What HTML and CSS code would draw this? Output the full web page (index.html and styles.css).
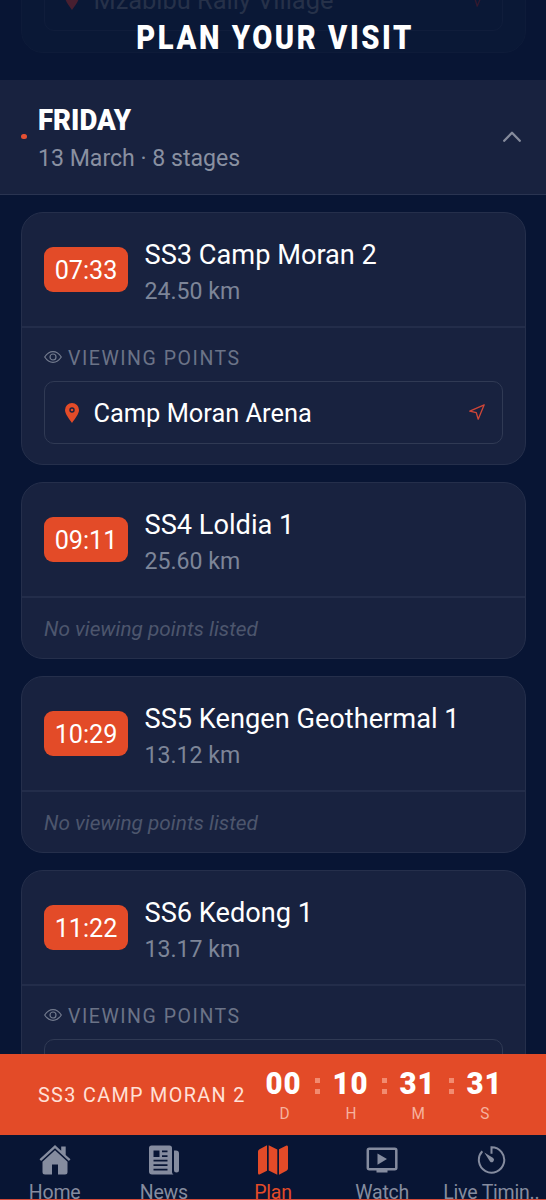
FILE: index.html
```html
<!DOCTYPE html>
<html lang="en">
<head>
<meta charset="utf-8">
<title>Plan your visit</title>
<link rel="stylesheet" href="styles.css">
</head>
<body>
<svg class="sprite" aria-hidden="true">
  <symbol id="eye" viewBox="0 0 18 12"><path d="M.7 6C3 2.500 5.600 .7 9 .7S15 2.500 17.300 6C15 9.500 12.400 11.300 9 11.300S3 9.500 .7 6Z"/><circle cx="9" cy="6" r="3"/></symbol>
  <symbol id="pin" viewBox="0 0 14 20"><path fill-rule="evenodd" d="M7 0a7 7 0 0 0-7 7c0 4 4 8.500 7 13 3-4.500 7-9 7-13a7 7 0 0 0-7-7Zm0 4.300a2.700 2.700 0 1 1 0 5.400 2.700 2.700 0 0 1 0-5.400Z"/><circle cx="7" cy="7" r="1.300"/></symbol>
  <symbol id="send" viewBox="0 0 16 16"><path d="M15.200 .8 .8 7.200 7.300 8.700 9.200 15.200Z"/></symbol>
</svg>
<div class="app">
  <header class="top">
    <div class="ghost"><div class="ghost-row"><svg class="pin"><use href="#pin"/></svg><span class="place">Mzabibu Rally Village</span><svg class="send"><use href="#send"/></svg></div></div>
    <h1 class="title">PLAN YOUR VISIT</h1>
  </header>
  <section class="day">
    <i class="dot"></i>
    <div class="day-text"><h2 class="day-name">FRIDAY</h2><p class="day-sub">13 March · 8 stages</p></div>
    <svg class="chevron" viewBox="0 0 18 11"><path d="M1.200 9.800 9 1.800l7.800 8"/></svg>
  </section>
  <main class="list">
    <article class="card">
      <div class="stage"><time class="time">07:33</time><div class="info"><h3 class="name">SS3 Camp Moran 2</h3><p class="km">24.50 km</p></div></div>
      <div class="views"><p class="label"><svg class="eye"><use href="#eye"/></svg><span>VIEWING POINTS</span></p>
        <div class="point"><svg class="pin"><use href="#pin"/></svg><span class="place">Camp Moran Arena</span><svg class="send"><use href="#send"/></svg></div></div>
    </article>
    <article class="card">
      <div class="stage"><time class="time">09:11</time><div class="info"><h3 class="name">SS4 Loldia 1</h3><p class="km">25.60 km</p></div></div>
      <p class="none">No viewing points listed</p>
    </article>
    <article class="card">
      <div class="stage"><time class="time">10:29</time><div class="info"><h3 class="name">SS5 Kengen Geothermal 1</h3><p class="km">13.12 km</p></div></div>
      <p class="none">No viewing points listed</p>
    </article>
    <article class="card">
      <div class="stage"><time class="time">11:22</time><div class="info"><h3 class="name">SS6 Kedong 1</h3><p class="km">13.17 km</p></div></div>
      <div class="views"><p class="label"><svg class="eye"><use href="#eye"/></svg><span>VIEWING POINTS</span></p>
        <div class="point"></div></div>
    </article>
  </main>
  <section class="countdown">
    <span class="next">SS3 CAMP MORAN 2</span>
    <div class="clock">
      <div class="unit"><b class="num">00</b><span class="abbr">D</span></div><i class="colon"></i>
      <div class="unit"><b class="num">10</b><span class="abbr">H</span></div><i class="colon"></i>
      <div class="unit"><b class="num">31</b><span class="abbr">M</span></div><i class="colon"></i>
      <div class="unit"><b class="num">31</b><span class="abbr">S</span></div>
    </div>
  </section>
  <nav class="tabs">
    <a class="tab"><svg class="icon" viewBox="0 0 32 30"><path d="M16 0 .5 14.300l1.600 1.700L16 3.300 29.900 16l1.600-1.700-4.800-4.400V1.500h-4.500v4.200Z"/><path d="M16 5.300 3.500 16.800V27q0 2.500 2.500 2.500h7V19.500h6v10h7q2.500 0 2.500-2.500V16.800Z"/></svg><span>Home</span></a>
    <a class="tab"><svg class="icon" viewBox="0 0 32 30"><path fill-rule="evenodd" d="M3.500.5h18q2.500 0 2.500 2.500v24q0 1.500 1.500 2.500H4Q1 29.500 1 26.500V3Q1 .5 3.500.5ZM5.500 5.500v6.500h6V5.500Zm8.500 0v1.700h5.500V5.500Zm0 4.700v1.700h5.500v-1.700ZM5.500 14.700v1.700h14v-1.700Zm0 4.500v1.700h14v-1.700Zm0 4.500v1.700h14v-1.700Z"/><path d="M26 5.500h2q3 0 3 3V25a2.500 2.500 0 0 1-5 0Z"/></svg><span>News</span></a>
    <a class="tab active"><svg class="icon" viewBox="0 0 32 30"><path d="M10 .3v25.400L2.500 29.500Q1 30 1 28V6.500q0-1.500 1.500-2.300ZM11.700.3l8.600 4.200v25.200l-8.600-4.200ZM22 4.300 29.500.5Q31 0 31 2v21.500q0 1.500-1.500 2.300L22 29.700Z"/></svg><span>Plan</span></a>
    <a class="tab"><svg class="icon" viewBox="0 0 32 30"><rect class="line" x="1.800" y="3.800" width="28.500" height="20.500" rx="1.500"/><path d="M11.500 8.500v11.200l9.500-5.600ZM10.500 24h11v3.500h-11Z"/></svg><span>Watch</span></a>
    <a class="tab"><svg class="icon" viewBox="0 0 32 30"><path class="line thin" d="M7.300 6.200A12.700 12.700 0 1 0 16.500 2.200v6.600"/><path d="m9.300 7.500 8.900 5.600a2.300 2.300 0 1 1-3.200 3.300Z"/></svg><span>Live Timin..</span></a>
  </nav>
</div>
</body>
</html>
```
FILE: styles.css
```css
* { box-sizing: border-box; }
body { margin: 0; background: #081534; font-family: Roboto, "Liberation Sans", sans-serif; color: #fff; }
h1, h2, h3, p { margin: 0; font-weight: 400; }
.sprite { display: none; }
.app { width: 546px; height: 1200px; overflow: hidden; display: flex; flex-direction: column; white-space: nowrap; }
svg { flex: none; display: block; }

.top { position: relative; height: 80px; flex: none; overflow: hidden; display: flex; justify-content: center; }
.ghost { position: absolute; left: 21px; top: -60px; width: 505px; height: 113px; padding: 27px 22px 22px; background: #0a1836; border: 1px solid #0e1b39; border-radius: 22px; }
.ghost-row { height: 63px; display: flex; align-items: center; padding: 0 18px 0 20px; border: 1px solid #101d3b; border-radius: 10px; }
.ghost .place { color: #263149; }
.ghost .pin { fill: #481f30; }
.ghost .send { stroke: #34192f; }
.title { position: relative; left: 2px; margin-top: 17px; font-size: 34px; line-height: 40px; font-weight: 900; letter-spacing: 3px; transform: scaleX(.856); }

.day { height: 115px; flex: none; display: flex; align-items: center; padding: 0 25px 0 21px; background: #18223f; border-bottom: 1px solid #2a3451; }
.dot { width: 6px; height: 5px; margin: 0 11px 1px 0; border-radius: 3px; background: #e45033; }
.day-text { flex: 1; padding-top: 7px; }
.day-name { font-size: 29.500px; line-height: 37px; font-weight: 900; transform: scaleX(.935); transform-origin: left; }
.day-sub { font-size: 23.100px; line-height: 40px; color: #8990a1; }
.chevron { width: 18px; height: 11px; margin-bottom: 1px; fill: none; stroke: #858b9c; stroke-width: 2.300; stroke-linecap: round; stroke-linejoin: round; }

.list { flex: 1; min-height: 0; overflow: hidden; display: flex; flex-direction: column; gap: 17px; padding: 17px 20px 0 21px; }
.card { flex: none; border: 1px solid #252f4b; border-radius: 22px; background: #18223f; }
.stage { height: 115px; display: flex; align-items: center; gap: 16.500px; padding: 0 22px; border-bottom: 2px solid #232d4a; }
.time { width: 84px; height: 45px; border-radius: 9px; background: #e34b28; text-align: center; font-size: 25.200px; line-height: 47px; }
.info { padding-top: 7px; }
.name { font-size: 27.200px; line-height: 36px; }
.km { font-size: 23.100px; line-height: 37px; color: #7d8598; }
.views { height: 136px; padding: 20px 22px 20px 22px; }
.label { display: flex; align-items: center; gap: 6px; height: 20px; margin-bottom: 13px; font-size: 19.500px; letter-spacing: 1.540px; color: #6b7387; }
.eye { width: 18px; height: 12px; margin-bottom: 2px; fill: none; stroke: #737b8e; stroke-width: 1.200; }
.point { height: 63px; display: flex; align-items: center; padding: 0 17px 0 20px; border: 1px solid #303a54; border-radius: 10px; }
.pin { width: 14px; height: 20px; fill: #e34b28; margin-right: 14.500px; }
.place { flex: 1; font-size: 25.400px; padding-top: 1px; }
.send { width: 16px; height: 16px; margin-bottom: 2px; fill: none; stroke: #cf4638; stroke-width: 1.300; stroke-linejoin: round; }
.none { height: 60px; padding-left: 22px; line-height: 62px; font-size: 20.800px; font-style: italic; color: #4d566d; }

.countdown { height: 81px; flex: none; display: flex; justify-content: space-between; padding: 0 42px 0 38px; background: #e34b28; }
.next { font-size: 19.800px; line-height: 84px; letter-spacing: 1.350px; color: #ffe0d7; }
.clock { display: flex; }
.unit { width: 38px; display: flex; flex-direction: column; align-items: center; }
.num { margin-top: 12px; font-size: 32px; line-height: 34px; font-weight: 900; letter-spacing: 1px; transform: scaleX(.92); }
.abbr { font-size: 16.500px; line-height: 28px; color: #f6b29e; transform: scaleX(.93); }
.colon { width: 5px; height: 16px; margin: 24px 12px 0; border: solid #f28b70; border-width: 5px 0; }

.tabs { height: 65px; flex: none; display: grid; grid-template-columns: repeat(5, 1fr); border-bottom: 1px solid #d34a39; overflow: hidden; }
.tab { display: flex; flex-direction: column; align-items: center; padding-top: 10px; font-size: 19.500px; letter-spacing: -.2px; line-height: 24px; color: #858c9f; height: 80px; }
.icon { width: 32px; height: 30px; margin-bottom: 6px; fill: currentColor; }
.line { fill: none; stroke: currentColor; stroke-width: 2.500; }
.thin { stroke-width: 2; }
.active { color: #e34b28; }
```
